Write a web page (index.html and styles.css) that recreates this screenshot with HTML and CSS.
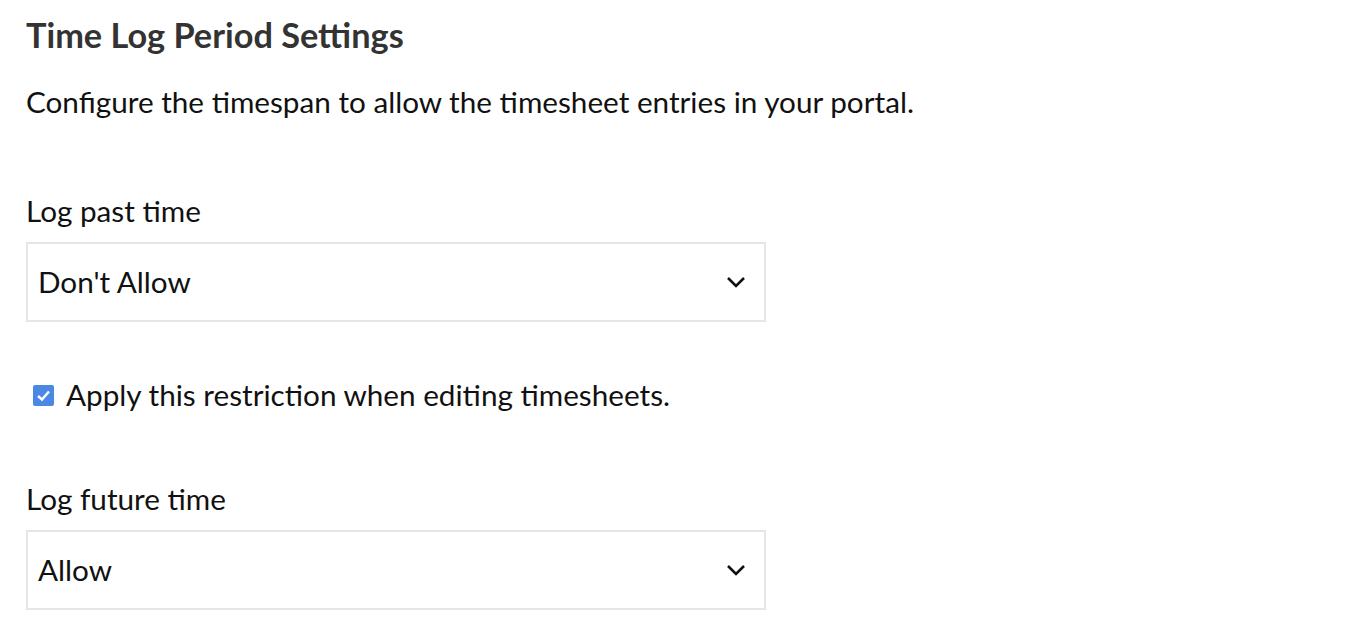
FILE: index.html
```html
<!DOCTYPE html>
<html lang="en">
<head>
  <meta charset="UTF-8" />
  <meta name="viewport" content="width=device-width, initial-scale=1" />
  <title>Time Log Period Settings</title>
  <link rel="stylesheet" href="styles.css">
</head>
<body>
  <div class="settings">
    <h1>Time Log Period Settings</h1>
    <p class="intro">Configure the timespan to allow the timesheet entries in your portal.</p>

    <div class="field first">
      <label>Log past time</label>
      <div class="select">
        <span>Don't Allow</span>
        <svg class="chevron" width="20" height="12" viewBox="0 0 20 12"><path d="M2 2 L10 10 L18 2" fill="none" stroke="#111" stroke-width="2.6"/></svg>
      </div>
    </div>

    <label class="check">
      <span class="box"><svg width="15" height="13" viewBox="0 0 15 13"><path d="M2 7 L6 10.5 L13 2.5" fill="none" stroke="#fff" stroke-width="2.5"/></svg></span>
      Apply this restriction when editing timesheets.
    </label>

    <div class="field">
      <label>Log future time</label>
      <div class="select">
        <span>Allow</span>
        <svg class="chevron" width="20" height="12" viewBox="0 0 20 12"><path d="M2 2 L10 10 L18 2" fill="none" stroke="#111" stroke-width="2.6"/></svg>
      </div>
    </div>
  </div>
</body>
</html>
```

FILE: styles.css
```css
body {
  font-family: Lato, 'Open Sans', sans-serif;
  color: #111;
  background: #fff;
  margin: 0;
  padding: 0;
}
.settings {
  padding: 15px 26px;
}
h1 {
  font-size: 34.3px;
  font-weight: bold;
  color: #333;
  margin: 0;
  line-height: 40px;
}
.intro {
  font-size: 29.7px;
  margin: 29px 0 0;
  line-height: 36px;
}
.field {
  margin-top: 68px;
}
.field.first {
  margin-top: 73px;
}
.field label {
  display: block;
  font-size: 29.7px;
  line-height: 36px;
  margin-bottom: 13px;
}
.select {
  width: 740px;
  height: 80px;
  box-sizing: border-box;
  border: 2px solid #e6e6e6;
  display: flex;
  align-items: center;
  justify-content: space-between;
  padding: 0 18px 0 10px;
  font-size: 29.7px;
  line-height: 36px;
}
.check {
  display: flex;
  align-items: center;
  gap: 12px;
  margin-top: 55px;
  padding-left: 7px;
  font-size: 29.7px;
  line-height: 36px;
}
.box {
  width: 21px;
  height: 21px;
  background: #4a88e4;
  border-radius: 2px;
  display: flex;
  align-items: center;
  justify-content: center;
}
```
